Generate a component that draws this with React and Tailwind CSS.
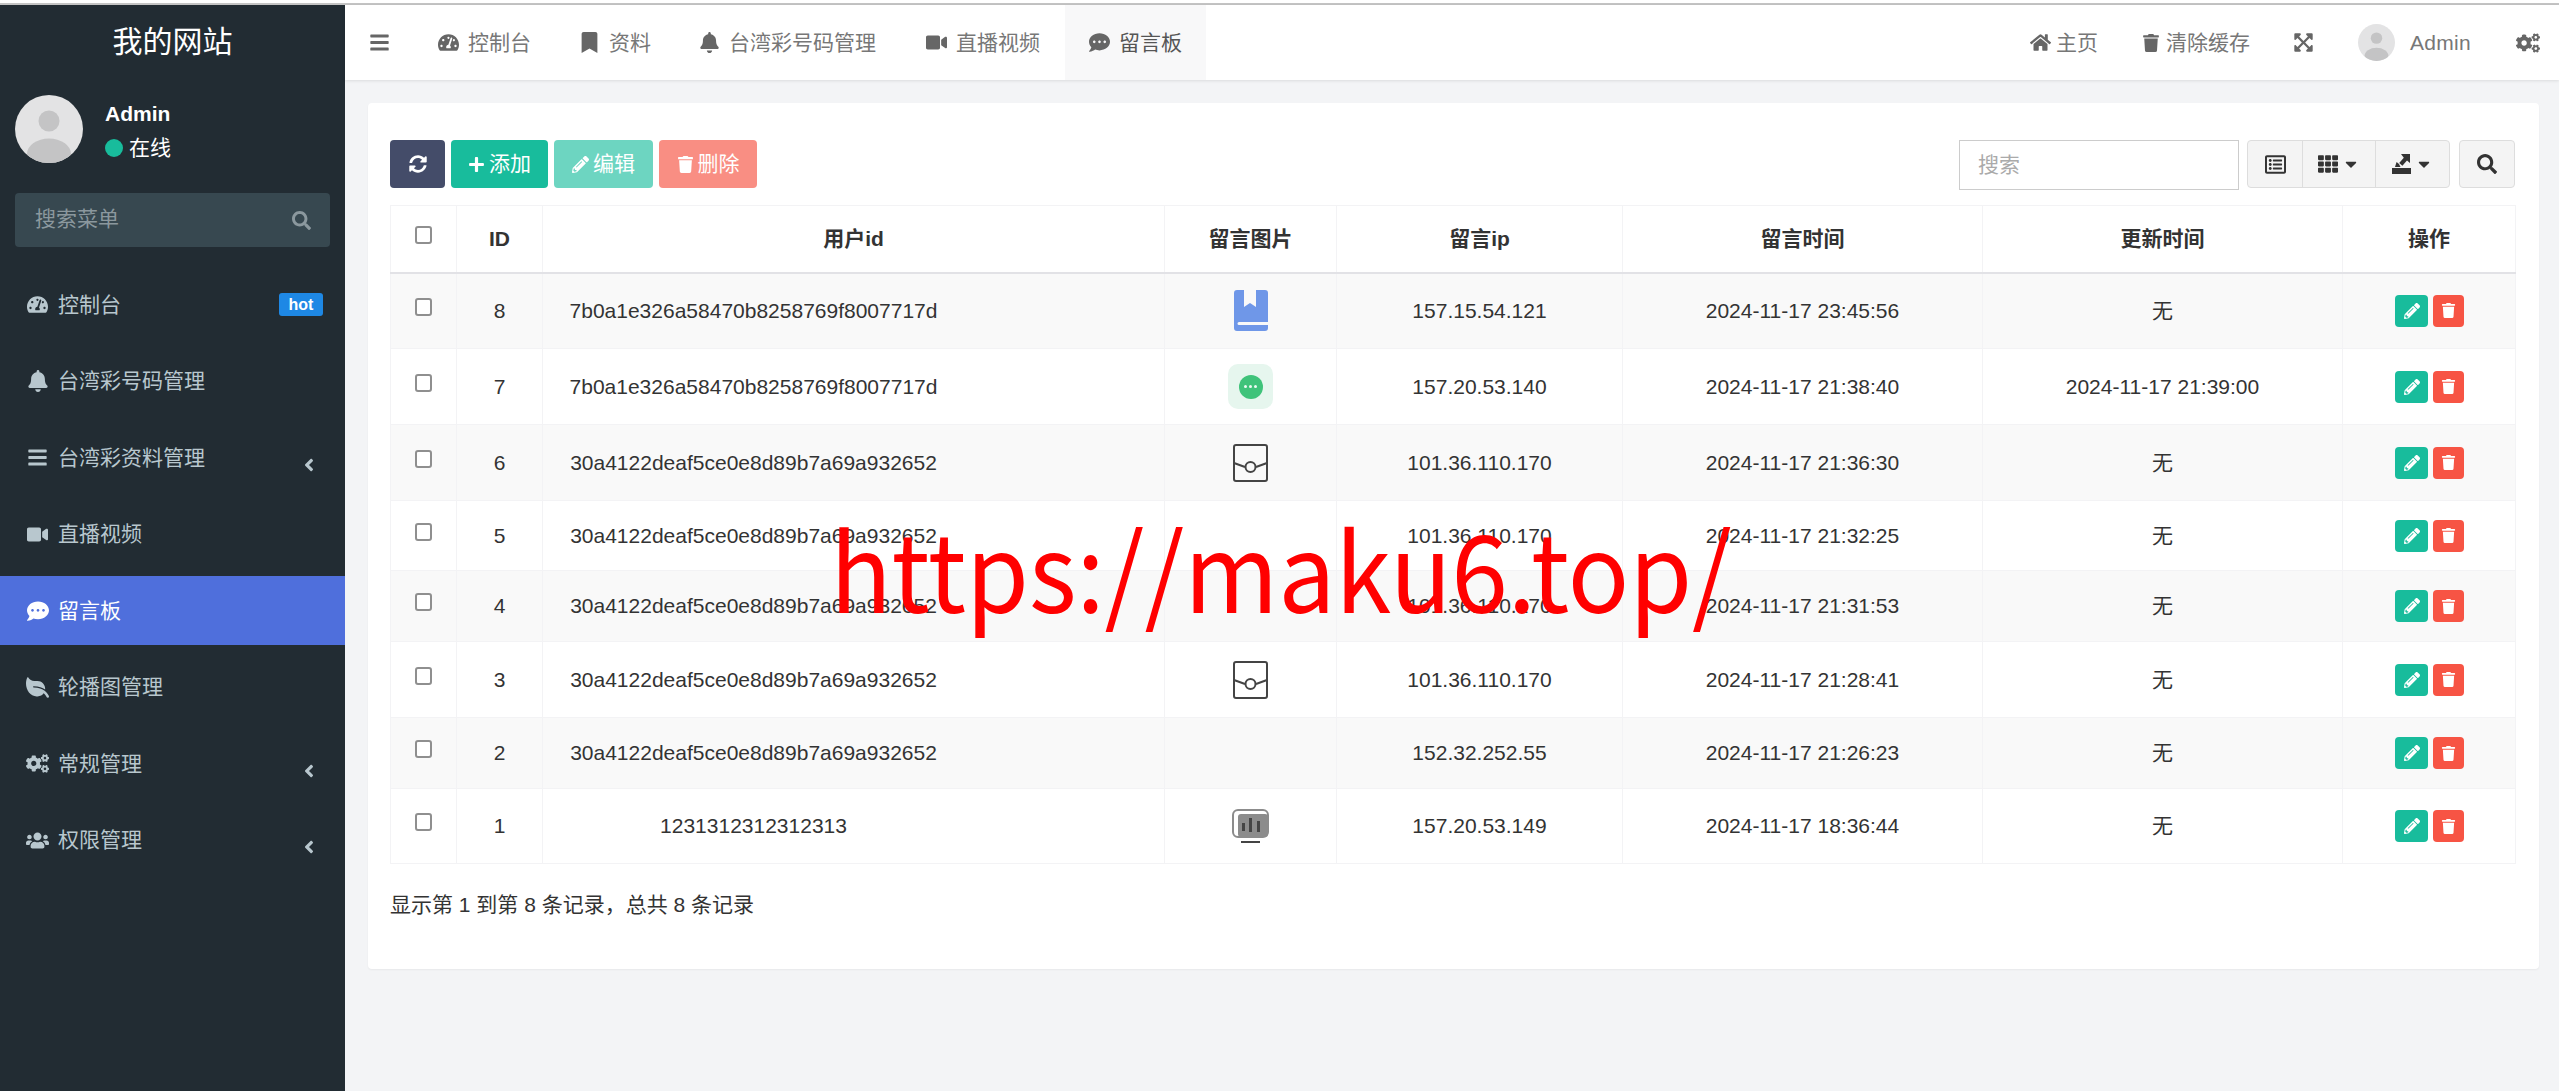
import React from 'react';
import {
  FaAngleLeft, FaBars, FaBell, FaBookmark, FaCaretDown, FaCogs, FaCommentDots, FaExpandArrowsAlt,
  FaHome, FaLeaf, FaPencilAlt, FaPlus, FaRegListAlt, FaSearch, FaSyncAlt, FaTachometerAlt, FaTh,
  FaTrash, FaUsers, FaVideo,
} from 'react-icons/fa';

const menu = [
  { icon: FaTachometerAlt, label: '控制台', badge: 'hot', iconSize: 21 },
  { icon: FaBell, label: '台湾彩号码管理', iconSize: 22 },
  { icon: FaBars, label: '台湾彩资料管理', arrow: true, iconSize: 21 },
  { icon: FaVideo, label: '直播视频', iconSize: 21 },
  { icon: FaCommentDots, label: '留言板', active: true, iconSize: 22 },
  { icon: FaLeaf, label: '轮播图管理', flip: true, iconSize: 23 },
  { icon: FaCogs, label: '常规管理', arrow: true, iconSize: 23 },
  { icon: FaUsers, label: '权限管理', arrow: true, iconSize: 23 },
];

const tabs = [
  { icon: FaTachometerAlt, label: '控制台', pad: 'pr-[24px]' },
  { icon: FaBookmark, label: '资料', pad: 'pr-[24px]' },
  { icon: FaBell, label: '台湾彩号码管理', pad: 'pr-[26px]' },
  { icon: FaVideo, label: '直播视频', pad: 'pr-[25px]' },
  { icon: FaCommentDots, label: '留言板', active: true, pad: 'pr-[24px]' },
];

const hashA = '7b0a1e326a58470b8258769f8007717d';
const hashB = '30a4122deaf5ce0e8d89b7a69a932652';

const rows = [
  { id: 8, user: hashA, pic: 'book', ip: '157.15.54.121', time: '2024-11-17 23:45:56', updated: '无', h: 'h-[76px]' },
  { id: 7, user: hashA, pic: 'chat', ip: '157.20.53.140', time: '2024-11-17 21:38:40', updated: '2024-11-17 21:39:00', h: 'h-[76px]' },
  { id: 6, user: hashB, pic: 'pouch', ip: '101.36.110.170', time: '2024-11-17 21:36:30', updated: '无', h: 'h-[76px]' },
  { id: 5, user: hashB, ip: '101.36.110.170', time: '2024-11-17 21:32:25', updated: '无', h: 'h-[70px]' },
  { id: 4, user: hashB, ip: '101.36.110.170', time: '2024-11-17 21:31:53', updated: '无', h: 'h-[71px]' },
  { id: 3, user: hashB, pic: 'pouch', ip: '101.36.110.170', time: '2024-11-17 21:28:41', updated: '无', h: 'h-[76px]' },
  { id: 2, user: hashB, ip: '152.32.252.55', time: '2024-11-17 21:26:23', updated: '无', h: 'h-[71px]' },
  { id: 1, user: '1231312312312313', pic: 'monitor', ip: '157.20.53.149', time: '2024-11-17 18:36:44', updated: '无', h: 'h-[75px]' },
];

function Avatar({ size }) {
  return (
    <svg width={size} height={size} viewBox="0 0 68 68" className="shrink-0 rounded-full">
      <rect width="68" height="68" fill="#e3e3e4" />
      <circle cx="34" cy="26" r="10.5" fill="#c4c4c5" />
      <ellipse cx="34" cy="59" rx="22" ry="15.5" fill="#c4c4c5" />
    </svg>
  );
}

function ExportIcon() {
  return (
    <svg width="19" height="20" viewBox="0 0 19 20" fill="#333">
      <rect x="0" y="14" width="19" height="6" />
      <path d="M9 0h9v9l-3-2.6-4.6 5.4-3.2-2.7 4.6-5.4z" />
      <path d="M3 13l1.6-5 2.4 2 1.5 3z" />
    </svg>
  );
}

function PicCell({ pic }) {
  if (pic === 'book') {
    return (
      <svg width="34" height="41" viewBox="0 0 34 41" className="mx-auto block">
        <path d="M3 0h7v17l6-4 6 4V0h9a3 3 0 0 1 3 3v29H5a1.500 1.500 0 0 0 0 3h29v3a3 3 0 0 1-3 3H3a3 3 0 0 1-3-3V3a3 3 0 0 1 3-3z" fill="#6f97e8" />
      </svg>
    );
  }
  if (pic === 'chat') {
    return (
      <div className="mx-auto flex h-[45px] w-[45px] items-center justify-center rounded-[10px] bg-[#e6f6ee]">
        <div className="flex h-6 w-6 items-center justify-center gap-[2px] rounded-full bg-[#3fc37a]">
          <span className="h-[3px] w-[3px] rounded-full bg-white/90"></span>
          <span className="h-[3px] w-[3px] rounded-full bg-white/90"></span>
          <span className="h-[3px] w-[3px] rounded-full bg-white/90"></span>
        </div>
      </div>
    );
  }
  if (pic === 'pouch') {
    return (
      <svg width="35" height="38" viewBox="0 0 35 38" fill="none" stroke="#444" strokeWidth="2" className="mx-auto block">
        <rect x="1" y="1" width="33" height="36" rx="2" />
        <path d="M1 19l11 4M23 23l11-4" />
        <circle cx="17.500" cy="23" r="5" />
      </svg>
    );
  }
  if (pic === 'monitor') {
    return (
      <svg width="37" height="35" viewBox="0 0 37 35" className="mx-auto block">
        <rect x="1" y="1" width="35" height="27" rx="5" fill="none" stroke="#8c8c8c" strokeWidth="2" />
        <rect x="6" y="5" width="30" height="23" rx="3" fill="#8c8c8c" />
        <rect x="10" y="14" width="3" height="8" fill="#444" />
        <rect x="17" y="9" width="3" height="14" fill="#444" />
        <rect x="25" y="12" width="3" height="11" fill="#444" />
        <rect x="9" y="32" width="19" height="2" fill="#444" />
      </svg>
    );
  }
  return null;
}

function Checkbox() {
  return (
    <input
      type="checkbox"
      className="block mx-auto -mt-2 h-[18px] w-[17px] appearance-none rounded-[3px] border-2 border-[#8f8f8f] bg-white"
    />
  );
}

export default function App() {
  return (
    <div className="flex h-[1091px] w-[2559px] flex-col overflow-hidden bg-white font-['Liberation_Sans','Noto_Sans_CJK_SC',sans-serif] text-[21px] text-[#333]">
      {/* Top strip */}
      <div className="h-[3px] shrink-0 bg-white"></div>
      <div className="h-[2px] shrink-0 bg-[#c4c4c4]"></div>

      <div className="flex min-h-0 flex-1">
        {/* Sidebar */}
        <aside className="w-[345px] shrink-0 bg-[#222c33]">
          <div className="flex h-[73px] items-center justify-center text-[30px] text-white">我的网站</div>
          <div className="mt-[17px] flex h-[68px] items-center gap-[22px] pl-[15px]">
            <Avatar size={68} />
            <div className="pt-[3px]">
              <div className="font-bold leading-[30px] text-white">Admin</div>
              <div className="mt-[4px] flex items-center gap-[6px] leading-[30px] text-white">
                <span className="h-[18px] w-[18px] rounded-full bg-[#18bc9c]"></span>
                在线
              </div>
            </div>
          </div>
          <div className="mx-[15px] mt-[30px] flex h-[54px] items-center justify-between rounded-[4px] bg-[#374850] pl-[20px] pr-[19px] text-[#8b989e]">
            <span className="mb-[2px]">搜索菜单</span>
            <FaSearch size={19} />
          </div>
          <nav className="mt-[23px]">
            {menu.map(item => (
              <div
                key={item.label}
                className={`mb-[7.5px] flex h-[69px] items-center pl-[27px] pr-[22px] ${item.active ? 'bg-[#4f6fdc] text-white' : 'text-[#b8c7ce]'}`}
              >
                <span className="flex w-[21px] shrink-0 justify-center">
                  <item.icon className={`shrink-0 ${item.flip ? '-scale-x-100' : ''}`} size={item.iconSize} />
                </span>
                <span className="ml-[10px] flex-1">{item.label}</span>
                {item.badge && (
                  <span className="flex h-[23px] w-[44px] items-center justify-center rounded-[3px] bg-[#1e88e5] text-[16px] font-bold text-white">
                    {item.badge}
                  </span>
                )}
                {item.arrow && <FaAngleLeft className="mt-[14px] mr-[4px]" size={20} />}
              </div>
            ))}
          </nav>
        </aside>

        <div className="flex min-w-0 flex-1 flex-col bg-[#f3f4f6]">
          {/* Top navbar */}
          <header className="flex h-[75px] shrink-0 items-center justify-between bg-white pr-[19px] text-[#777] shadow-[0_1px_3px_rgba(0,0,0,0.1)]">
            <div className="flex h-full items-center">
              <div className="flex w-[69px] justify-center text-[#666]"><FaBars size={21} /></div>
              {tabs.map(tab => (
                <div key={tab.label} className={`flex h-full items-center gap-[9px] pl-[24px] ${tab.pad} ${tab.active ? 'bg-[#f8f8f9] text-[#555]' : ''}`}>
                  <tab.icon className="w-[21px] text-[#666]" size={21} />
                  <span>{tab.label}</span>
                </div>
              ))}
            </div>
            <div className="flex h-full items-center">
              <FaHome className="text-[#666]" size={21} />
              <span className="ml-[5px]">主页</span>
              <FaTrash className="ml-[44px] text-[#666]" size={18} />
              <span className="ml-[6px]">清除缓存</span>
              <FaExpandArrowsAlt className="ml-[43px] text-[#666]" size={21} />
              <div className="ml-[44px]"><Avatar size={37} /></div>
              <span className="ml-[15px] tracking-[0.3px]">Admin</span>
              <FaCogs className="ml-[45px] text-[#666]" size={24} />
            </div>
          </header>

          {/* Content */}
          <main className="pl-[23px] pr-[20px] pt-[23px]">
            <div className="rounded-[4px] bg-white pb-[49px] pl-[22px] pr-[24px] pt-[37px] shadow-[0_1px_2px_rgba(0,0,0,0.05)]">
              {/* Toolbar */}
              <div className="mb-[15px] flex h-[50px] items-start justify-between">
                <div className="flex gap-[6px] text-white">
                  <button className="flex h-[48px] w-[55px] items-center justify-center rounded-[4px] bg-[#444c69]"><FaSyncAlt size={18} /></button>
                  <button className="flex h-[48px] w-[97px] items-center justify-center gap-[4px] rounded-[4px] bg-[#18bc9c]"><FaPlus size={17} />添加</button>
                  <button className="flex h-[48px] w-[99px] items-center justify-center gap-[4px] rounded-[4px] bg-[#6dd5c1]"><FaPencilAlt size={17} />编辑</button>
                  <button className="flex h-[48px] w-[98px] items-center justify-center gap-[4px] rounded-[4px] bg-[#f98e83]"><FaTrash size={17} />删除</button>
                </div>
                <div className="flex items-start">
                  <div className="flex h-[50px] w-[280px] items-center border border-[#ccc] pl-[18px] text-[#aaa]">搜索</div>
                  <div className="ml-[8px] flex h-[48px] rounded-[4px] border border-[#ddd] bg-[#f4f4f4] text-[#333]">
                    <div className="flex w-[55px] items-center justify-center border-r border-[#ddd]"><FaRegListAlt size={21} /></div>
                    <div className="flex w-[73px] items-center justify-center gap-[4px] border-r border-[#ddd]"><FaTh size={20} /><FaCaretDown size={18} /></div>
                    <div className="flex w-[73px] items-center justify-center gap-[4px]"><ExportIcon /><FaCaretDown size={18} /></div>
                  </div>
                  <div className="ml-[9px] flex h-[48px] w-[56px] items-center justify-center rounded-[4px] border border-[#ddd] bg-[#f4f4f4] text-[#333]"><FaSearch size={20} /></div>
                </div>
              </div>

              {/* Table */}
              <table className="w-[2125px] table-fixed border-collapse">
                <colgroup>
                  <col className="w-[66px]" />
                  <col className="w-[86px]" />
                  <col className="w-[622px]" />
                  <col className="w-[172px]" />
                  <col className="w-[286px]" />
                  <col className="w-[360px]" />
                  <col className="w-[360px]" />
                  <col className="w-[173px]" />
                </colgroup>
                <thead>
                  <tr className="h-[67px] border-b-2 border-[#e2e2e6]">
                    <th className="border border-b-0 border-[#f3f3f5] font-normal"><Checkbox /></th>
                    {['ID', '用户id', '留言图片', '留言ip', '留言时间', '更新时间', '操作'].map(title => (
                      <th key={title} className="border border-b-0 border-[#f3f3f5] text-center font-bold">{title}</th>
                    ))}
                  </tr>
                </thead>
                <tbody>
                  {rows.map((row, i) => (
                    <tr key={row.id} className={`${row.h} ${i % 2 === 0 ? 'bg-[#f9f9f9]' : 'bg-white'}`}>
                      <td className="border border-[#f3f3f5]"><Checkbox /></td>
                      <td className="border border-[#f3f3f5] text-center">{row.id}</td>
                      <td className="border border-[#f3f3f5]"><div className="w-[421px] text-center">{row.user}</div></td>
                      <td className="border border-[#f3f3f5]"><PicCell pic={row.pic} /></td>
                      <td className="border border-[#f3f3f5] text-center">{row.ip}</td>
                      <td className="border border-[#f3f3f5] text-center">{row.time}</td>
                      <td className="border border-[#f3f3f5] text-center">{row.updated}</td>
                      <td className="border border-[#f3f3f5]">
                        <div className="flex justify-center gap-[5px] pl-[1px] text-white">
                          <button className="flex h-[32px] w-[33px] items-center justify-center rounded-[4px] bg-[#18bc9c]"><FaPencilAlt size={16} /></button>
                          <button className="flex h-[32px] w-[31px] items-center justify-center rounded-[4px] bg-[#f75444]"><FaTrash size={15} /></button>
                        </div>
                      </td>
                    </tr>
                  ))}
                </tbody>
              </table>

              <div className="mt-[26px] leading-[30px]">显示第 1 到第 8 条记录，总共 8 条记录</div>
            </div>
          </main>
        </div>
      </div>

      {/* Watermark over the page */}
      <div className="absolute left-[830px] top-[491px] origin-left scale-x-[0.94] font-['Noto_Sans_CJK_SC',sans-serif] text-[108px] leading-[150px] whitespace-nowrap text-[#ff0000]">
        https://maku6.top/
      </div>
    </div>
  );
}
